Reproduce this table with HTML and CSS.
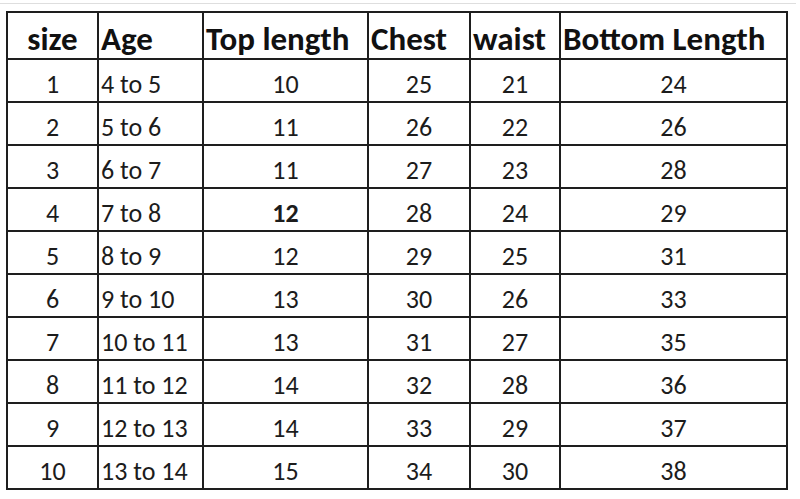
FILE: index.html
```html
<!DOCTYPE html>
<html>
<head>
<meta charset="utf-8">
<link rel="stylesheet" href="styles.css">
</head>
<body>
<div class="topline"></div>
<table class="chart">
  <colgroup>
    <col class="c-size"><col class="c-age"><col class="c-top"><col class="c-chest"><col class="c-waist"><col class="c-bottom">
  </colgroup>
  <thead>
    <tr><th class="ctr">size</th><th>Age</th><th>Top length</th><th>Chest</th><th>waist</th><th>Bottom Length</th></tr>
  </thead>
  <tbody>
    <tr><td>1</td><td class="age">4 to 5</td><td>10</td><td>25</td><td>21</td><td>24</td></tr>
    <tr><td>2</td><td class="age">5 to 6</td><td>11</td><td>26</td><td>22</td><td>26</td></tr>
    <tr><td>3</td><td class="age">6 to 7</td><td>11</td><td>27</td><td>23</td><td>28</td></tr>
    <tr><td>4</td><td class="age">7 to 8</td><td class="bold">12</td><td>28</td><td>24</td><td>29</td></tr>
    <tr><td>5</td><td class="age">8 to 9</td><td>12</td><td>29</td><td>25</td><td>31</td></tr>
    <tr><td>6</td><td class="age">9 to 10</td><td>13</td><td>30</td><td>26</td><td>33</td></tr>
    <tr><td>7</td><td class="age">10 to 11</td><td>13</td><td>31</td><td>27</td><td>35</td></tr>
    <tr><td>8</td><td class="age">11 to 12</td><td>14</td><td>32</td><td>28</td><td>36</td></tr>
    <tr><td>9</td><td class="age">12 to 13</td><td>14</td><td>33</td><td>29</td><td>37</td></tr>
    <tr><td>10</td><td class="age">13 to 14</td><td>15</td><td>34</td><td>30</td><td>38</td></tr>
  </tbody>
</table>
</body>
</html>
```
FILE: styles.css
```css
html, body {
  margin: 0;
  padding: 0;
  background: #ffffff;
}
body {
  font-family: Carlito, Lato, "Liberation Sans", sans-serif;
  color: #1c1c1c;
}
.topline {
  height: 1px;
  margin-top: 3px;
  width: 796px;
  background: #dedede;
}
.chart {
  margin: 7px 0 0 6px;
  border-collapse: collapse;
  table-layout: fixed;
  width: 782px;
}
.c-size { width: 91px; }
.c-age { width: 105px; }
.c-top { width: 165px; }
.c-chest { width: 102px; }
.c-waist { width: 90px; }
.c-bottom { width: 227px; }
.chart th, .chart td {
  border: 2px solid #1e1e1e;
  padding: 0 0 0 2px;
  vertical-align: bottom;
  white-space: nowrap;
  overflow: hidden;
}
.chart th {
  height: 45px;
  font-size: 33px;
  line-height: 38px;
  font-weight: 700;
  text-align: left;
  color: #111;
}
.chart th.ctr {
  text-align: center;
  padding-left: 0;
}
.chart td {
  height: 40px;
  font-size: 26px;
  line-height: 32px;
  font-weight: 400;
  text-align: center;
  padding-left: 0;
  padding-bottom: 1px;
}
.chart td.age {
  text-align: left;
  padding-left: 2px;
}
.chart td.bold {
  font-weight: 700;
}
```
